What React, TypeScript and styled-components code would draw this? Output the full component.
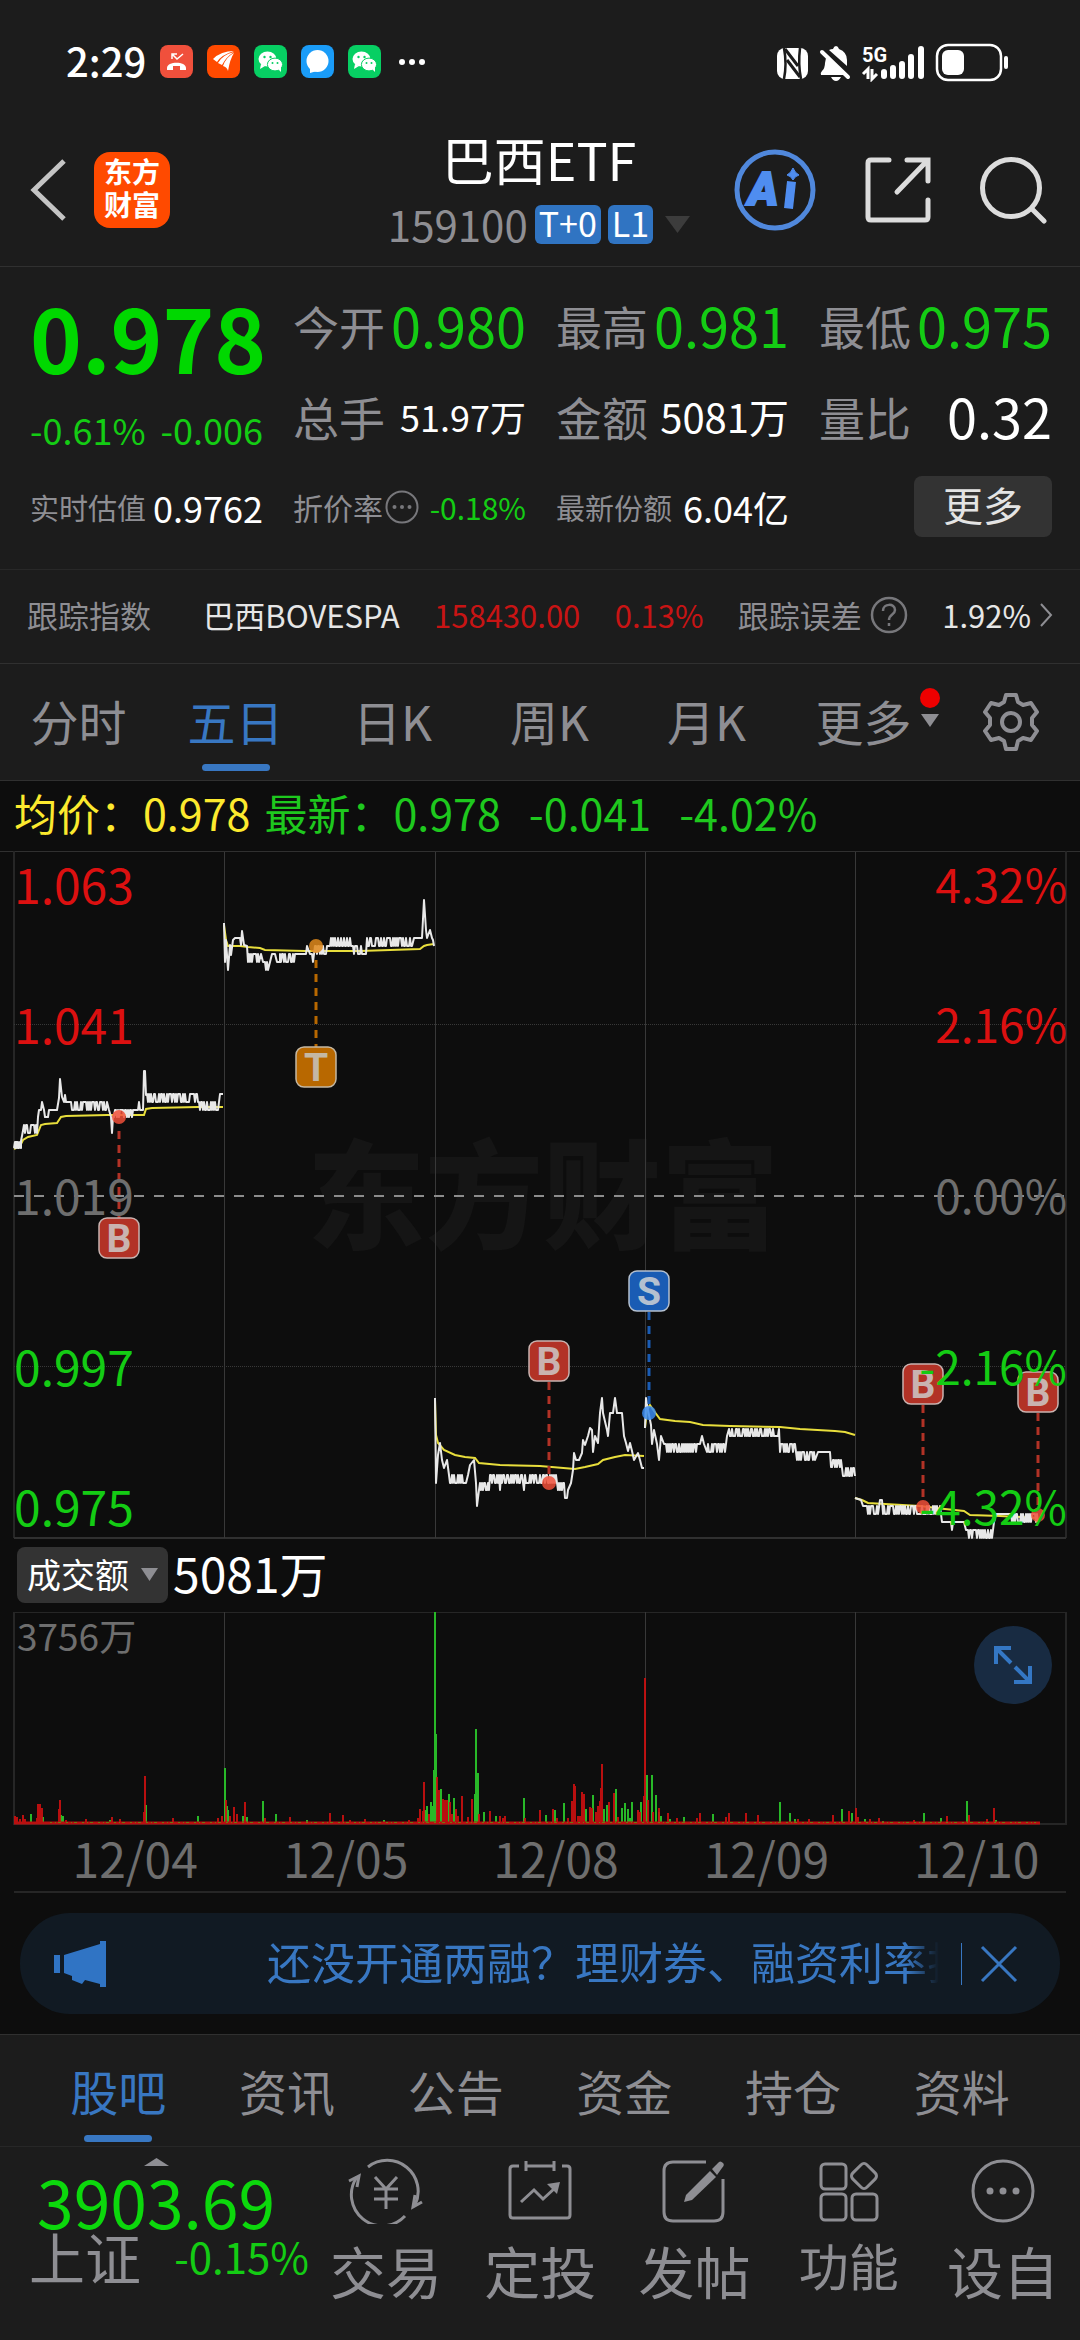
import React from "react";
import styled, { createGlobalStyle } from "styled-components";

const color = {
  panel: "#1c1c1c",
  chart: "#0d0d0d",
  line: "#303030",
  grey: "#8e8e93",
  axis: "#6e6e6e",
  green: "#14cc14",
  red: "#dc1010",
  blue: "#3877c2",
  white: "#ffffff",
  yellow: "#fce92e",
};

const GlobalStyle = createGlobalStyle`
  * { box-sizing: border-box; }
  body {
    margin: 0;
    background: ${color.panel};
    color: ${color.white};
    font-family: "Noto Sans CJK SC", "Noto Sans", sans-serif;
  }
  button, select {
    font: inherit;
    color: inherit;
    background: none;
    border: 0;
    padding: 0;
    margin: 0;
  }
  a { color: inherit; text-decoration: none; }
  svg { display: block; flex-shrink: 0; }
`;

const Page = styled.main`
  display: flex;
  flex-direction: column;
  min-height: 100vh;
  overflow: hidden;
`;

/* ---------- status bar ---------- */

const StatusBar = styled.div`
  display: flex;
  justify-content: space-between;
  align-items: center;
  height: 120px;
  padding: 3px 70px 0 66px;
`;

const StatusGroup = styled.div`
  display: flex;
  align-items: center;
  gap: 14px;
`;

const Clock = styled.span`
  font-size: 40px;
  line-height: 48px;
  font-weight: 500;
  padding-bottom: 4px;
`;

/* ---------- header ---------- */

const Header = styled.header`
  display: grid;
  grid-template-columns: 1fr auto 1fr;
  height: 147px;
  padding: 0 32px 0 30px;
  border-bottom: 1px solid ${color.line};
`;

const HeaderSide = styled.div<{ $end?: boolean }>`
  display: flex;
  align-items: center;
  justify-content: ${(p) => (p.$end ? "flex-end" : "flex-start")};
  gap: ${(p) => (p.$end ? 49 : 28)}px;
  padding-bottom: 6px;
`;

const IconButton = styled.button`
  display: flex;
  align-items: center;
  justify-content: center;
`;

const Logo = styled.a`
  display: flex;
  flex-direction: column;
  align-items: center;
  justify-content: center;
  width: 76px;
  height: 76px;
  padding-bottom: 4px;
  border-radius: 16px;
  background: #ff4a00;
  font-size: 28px;
  line-height: 33px;
  font-weight: 700;
`;

const TitleBlock = styled.div`
  display: flex;
  flex-direction: column;
  align-items: center;
  padding-top: 9px;
`;

const Title = styled.h1`
  margin: 0;
  font-size: 52px;
  line-height: 60px;
  font-weight: 400;
`;

const CodeRow = styled.div`
  display: flex;
  align-items: center;
  gap: 7px;
  color: ${color.grey};
  font-size: 42px;
  line-height: 70px;
`;

const Badge = styled.span`
  height: 39px;
  padding: 0 4px;
  border-radius: 6px;
  background: #3074c2;
  color: ${color.white};
  font-size: 34px;
  line-height: 35px;
`;

const DropButton = styled(IconButton)`
  padding-left: 5px;
`;

/* ---------- quote ---------- */

const Quote = styled.section`
  display: grid;
  grid-template-columns: repeat(4, minmax(0, 1fr));
  grid-auto-rows: 91px;
  column-gap: 30px;
  padding: 12px 28px 17px 30px;
  border-bottom: 1px solid #282828;
`;

const PriceCell = styled.div`
  grid-row: span 2;
  color: ${color.green};
`;

const BigPrice = styled.div`
  font-size: 88px;
  line-height: 114px;
  font-weight: 700;
  color: #00d800;
`;

const Split = styled.div`
  display: flex;
  justify-content: space-between;
  font-size: 36px;
  line-height: 72px;
`;

const Stat = styled.div`
  display: flex;
  align-items: center;
  justify-content: space-between;
  white-space: nowrap;
`;

const Label = styled.span<{ $size: number }>`
  display: flex;
  align-items: center;
  gap: 2px;
  color: ${color.grey};
  font-size: ${(p) => p.$size}px;
`;

const Value = styled.span<{ $size: number; $color?: string }>`
  font-size: ${(p) => p.$size}px;
  color: ${(p) => p.$color ?? color.white};
`;

const MoreButton = styled.button`
  justify-self: end;
  align-self: center;
  width: 138px;
  height: 61px;
  padding-bottom: 4px;
  border-radius: 8px;
  background: #333333;
  color: #e4e4e4;
  font-size: 40px;
  line-height: 57px;
`;

/* ---------- tracked index ---------- */

const IndexRow = styled.section`
  display: flex;
  align-items: center;
  justify-content: space-between;
  height: 94px;
  padding: 0 27px 4px;
  border-bottom: 1px solid ${color.line};
  font-size: 31px;
  white-space: nowrap;
`;

const IndexText = styled.span<{ $color?: string; $lead?: number }>`
  display: flex;
  align-items: center;
  gap: 8px;
  margin-left: ${(p) => p.$lead ?? 0}px;
  color: ${(p) => p.$color ?? "#e6e6e6"};
`;

/* ---------- tabs ---------- */

const ChartTabs = styled.nav`
  display: grid;
  grid-template-columns: repeat(6, 157fr) 138fr;
  height: 117px;
  border-bottom: 1px solid ${color.line};
`;

const Tab = styled.button<{ $active?: boolean }>`
  position: relative;
  display: flex;
  align-items: center;
  justify-content: center;
  gap: 9px;
  font-size: 48px;
  line-height: 64px;
  padding-bottom: 4px;
  white-space: nowrap;
  color: ${(p) => (p.$active ? color.blue : color.grey)};
  &::after {
    content: "";
    display: ${(p) => (p.$active ? "block" : "none")};
    position: absolute;
    left: calc(50% - 34px);
    bottom: 9px;
    width: 68px;
    height: 7px;
    border-radius: 4px;
    background: ${color.blue};
  }
`;

const MoreTab = styled(Tab)`
  padding-left: 27px;
`;

const Dot = styled.i`
  position: absolute;
  right: 2px;
  top: 24px;
  width: 20px;
  height: 20px;
  border-radius: 50%;
  background: #ee0000;
`;

/* ---------- charts ---------- */

const ChartPanel = styled.section`
  background: ${color.chart};
`;

const Legend = styled.div`
  display: flex;
  height: 69px;
  padding-left: 14px;
  font-size: 43px;
  line-height: 62px;
  white-space: pre;
  color: #1ec81e;
`;

const LegendItem = styled.span<{ $color?: string; $gap: number }>`
  color: ${(p) => p.$color ?? "inherit"};
  margin-right: ${(p) => p.$gap}px;
`;

const Stack = styled.div`
  position: relative;
  display: grid;
  & > * { grid-area: 1 / 1; }
`;

const Drawing = styled.svg`
  width: 100%;
  height: auto;
`;

const Axis = styled.div`
  display: grid;
  grid-template-rows: 56fr 224fr 118fr 224fr 56fr;
  padding: 5px 13px 7px 14px;
  font-size: 48px;
  line-height: 56px;
  z-index: 1;
`;

const AxisRow = styled.div<{ $color: string }>`
  display: flex;
  align-items: center;
  justify-content: space-between;
  color: ${(p) => p.$color};
`;

const AxisPercent = styled.span`
  font-size: 46px;
`;

const VolumeHead = styled.div`
  display: flex;
  align-items: center;
  gap: 5px;
  height: 70px;
  padding: 0 0 0 17px;
  font-size: 48px;
`;

const VolumeTotal = styled.span`
  line-height: 60px;
  padding-bottom: 6px;
`;

const Picker = styled.label`
  display: flex;
  align-items: center;
  gap: 12px;
  height: 56px;
  padding: 0 10px 2px;
  border-radius: 8px;
  background: #333333;
`;

const PickerSelect = styled.select`
  appearance: none;
  font-size: 34px;
  line-height: 50px;
  height: 52px;
`;

const VolumeMax = styled.span`
  padding: 0 0 0 17px;
  color: ${color.axis};
  font-size: 37px;
  line-height: 50px;
  z-index: 1;
`;

const ExpandButton = styled.button`
  position: absolute;
  right: 28px;
  top: 16px;
  display: flex;
  align-items: center;
  justify-content: center;
  width: 78px;
  height: 78px;
  border-radius: 50%;
  background: #182b42;
`;

const Dates = styled.div`
  display: grid;
  grid-template-columns: repeat(5, 1fr);
  margin: 0 14px;
  height: 67px;
  border-bottom: 2px solid #262626;
  color: ${color.axis};
  font-size: 48px;
  line-height: 62px;
  text-align: center;
  & > span { padding-left: 32px; }
`;

const Banner = styled.aside`
  display: flex;
  align-items: center;
  height: 101px;
  margin: 20px;
  padding: 0 42px 0 34px;
  border-radius: 50px;
  background: #111a23;
  color: ${color.blue};
`;

const BannerText = styled.a`
  flex: 1;
  min-width: 0;
  overflow: hidden;
  white-space: nowrap;
  margin: 0 22px 0 110px;
  padding: 0 0 5px 51px;
  font-size: 44px;
  line-height: 60px;
  mask-image: linear-gradient(to right, #000 calc(100% - 32px), transparent);
`;

const BannerClose = styled(IconButton)`
  height: 42px;
  padding-left: 18px;
  border-left: 1px solid ${color.blue};
`;

/* ---------- bottom ---------- */

const InfoTabs = styled.nav`
  display: grid;
  grid-template-columns: repeat(6, 1fr);
  height: 113px;
  padding: 0 34px;
  border-top: 1px solid ${color.line};
  border-bottom: 1px solid #272727;
  & > ${Tab} { padding-bottom: 2px; }
  & > ${Tab}::after { bottom: 4px; }
`;

const BottomBar = styled.footer`
  display: grid;
  grid-template-columns: 309fr 771fr;
`;

const Market = styled.button`
  display: flex;
  flex-direction: column;
  align-items: stretch;
  padding: 11px 0 0 29px;
  text-align: left;
  color: ${color.green};
`;

const MarketArrow = styled.span`
  display: flex;
  justify-content: center;
  padding-right: 26px;
`;

const MarketValue = styled.span`
  padding-left: 8px;
  font-size: 66px;
  line-height: 68px;
  color: #0cd80c;
`;

const MarketName = styled.span`
  display: flex;
  align-items: center;
  justify-content: space-between;
  font-size: 42px;
  line-height: 44px;
`;

const Actions = styled.nav`
  display: grid;
  grid-template-columns: repeat(5, 1fr);
`;

const Action = styled.button<{ $large: boolean }>`
  display: flex;
  flex-direction: column;
  align-items: center;
  gap: 10px;
  padding-top: 11px;
  color: ${color.grey};
  font-size: ${(p) => (p.$large ? 56 : 50)}px;
  line-height: ${(p) => (p.$large ? 72 : 60)}px;
  white-space: nowrap;
`;

/* ---------- small icons ---------- */

const Triangle = ({ w, h, fill, up }: { w: number; h: number; fill: string; up?: boolean }) => (
  <svg width={w} height={h} viewBox="0 0 10 10" preserveAspectRatio="none" aria-hidden>
    <path d={up ? "M0 10L5 0L10 10Z" : "M0 0H10L5 10Z"} fill={fill} />
  </svg>
);

const AppTile = ({ fill, children }: { fill: string; children: React.ReactNode }) => (
  <svg width="33" height="33" viewBox="0 0 33 33" aria-hidden>
    <rect width="33" height="33" rx="8" fill={fill} />
    {children}
  </svg>
);

const WeChat = () => (
  <AppTile fill="#07cf63">
    <ellipse cx="13.5" cy="14" rx="9" ry="7.6" fill="#fff" />
    <path d="M7 19l-1 5 5-3z" fill="#fff" />
    <circle cx="10.5" cy="12" r="1.2" fill="#07cf63" />
    <circle cx="16.5" cy="12" r="1.2" fill="#07cf63" />
    <ellipse cx="21" cy="19.5" rx="7.6" ry="6.4" fill="#fff" stroke="#07cf63" strokeWidth="1" />
    <path d="M24 24l3 3v-5z" fill="#fff" />
    <circle cx="18.5" cy="18" r="1" fill="#07cf63" />
    <circle cx="23.5" cy="18" r="1" fill="#07cf63" />
  </AppTile>
);

const StatusIcons = () => (
  <svg width="234" height="40" viewBox="776 40 234 40" fill="none" role="img" aria-label="NFC，静音，5G，电量">
    <rect x="777" y="46" width="31" height="31" rx="8" fill="#fff" />
    <path d="M784 46Q787 62 784 77M800 46Q798 62 801 77" stroke={color.panel} strokeWidth="2.5" />
    <path d="M785 47L798 64M787 58L800 75" stroke={color.panel} strokeWidth="3" />
    <path d="M829 48q2-1 4-1 1-3 3-3t3 3q8 3 8 11v6zM826 56l21 17h-26q-1-2 1-4 3-3 3-8z" fill="#fff" />
    <path d="M822 50L848 75" stroke="#fff" strokeWidth="4" strokeLinecap="round" />
    <path d="M831 75h10q-2 4-5 4t-5-4z" fill="#fff" />
    <text x="862" y="60" fontSize="20" fontWeight="700" fill="#fff" fontFamily="Roboto, sans-serif">5G</text>
    <path d="M868 77V67l-5 5M872 67v10l5-5" stroke="#fff" strokeWidth="3" />
    <g stroke="#fff" strokeWidth="6" strokeLinecap="round">
      <path d="M884 70V74M893 66V74M902 62V74M911 55V74M921 47V74" />
    </g>
    <rect x="937" y="43" width="64" height="35" rx="11" stroke="#fff" strokeWidth="2.500" />
    <rect x="942" y="48" width="22" height="25" rx="6" fill="#fff" />
    <path d="M1006 56V65" stroke="#fff" strokeWidth="4" strokeLinecap="round" />
  </svg>
);

const Gear = () => (
  <svg width="58" height="60" viewBox="0 0 58 60" fill="none" stroke={color.grey} strokeWidth="4" aria-hidden>
    <path d="M24 3h10l2 7 5 3 8-2 6 9-5 6v7l5 6-6 9-8-2-5 3-2 8H24l-2-8-5-3-8 2-6-9 5-6v-7l-5-6 6-9 8 2 5-3z" strokeLinejoin="round" />
    <circle cx="29" cy="30" r="9" />
  </svg>
);

/* ---------- chart data ---------- */

type Point = [number, number];

// A stretch of minute ticks that flips between two neighbouring price levels.
const ticks = (from: number, to: number, high: number, low: number, seed = 1): Point[] => {
  const out: Point[] = [];
  let s = seed * 7919 + 13;
  let top = false;
  for (let x = from; x <= to; x += 1) {
    s = (s * 1103515245 + 12345) % 2147483648;
    if (s / 2147483648 < 0.62) top = !top;
    out.push([x, top ? high : low]);
  }
  return out;
};

const priceDays: Point[][] = [
  [
    [14, 1148], [15, 1142], [15, 1148], [16, 1142], [16, 1148], [17, 1142], [18, 1148], [18, 1142], [19, 1148], [20, 1142], [21, 1148], [21, 1141], [22, 1136],
    ...ticks(24, 37, 1125, 1133, 2),
    [38, 1117], [39, 1110], [41, 1110], [42, 1102], [44, 1110], [45, 1117], [48, 1117], [49, 1110], [57, 1110], [59, 1098], [60, 1079], [62, 1097], [64, 1102], [65, 1095], [66, 1102], [70, 1102],
    ...ticks(71, 107, 1102, 1110, 3),
    [109, 1110], [111, 1117], [112, 1133], [113, 1117],
    ...ticks(114, 134, 1110, 1117, 4),
    [134, 1110], [138, 1110], [139, 1102], [140, 1110], [143, 1110], [144, 1071], [145, 1071], [146, 1095],
    ...ticks(147, 198, 1094, 1102, 5),
    ...ticks(199, 218, 1102, 1110, 6),
    [220, 1094], [223, 1094],
  ],
  [
    [224, 923], [225, 962], [226, 940], [228, 970], [230, 945], [231, 955], [233, 940], [235, 938], [240, 938], [241, 945], [242, 931], [244, 945], [247, 946],
    ...ticks(248, 259, 954, 962, 7), [261, 954],
    ...ticks(263, 268, 962, 970, 8), [270, 962], [272, 954], [275, 954], [277, 962], [280, 962],
    ...ticks(280, 294, 954, 962, 9), [295, 954], [306, 954], [307, 946], [310, 954], [312, 954], [313, 962],
    ...ticks(315, 329, 946, 954, 10),
    ...ticks(330, 350, 938, 946, 11),
    ...ticks(351, 366, 946, 954, 12),
    ...ticks(367, 412, 938, 946, 13),
    [414, 938], [422, 938], [424, 900], [426, 930], [427, 938], [430, 930], [432, 938], [433, 940], [434, 946],
  ],
  [
    [435, 1398], [436, 1483], [438, 1455], [440, 1443], [442, 1460], [444, 1468], [447, 1460], [449, 1475],
    ...ticks(450, 466, 1475, 1483, 14),
    [468, 1475], [470, 1465], [474, 1460], [476, 1483], [477, 1506], [479, 1490],
    ...ticks(480, 489, 1483, 1490, 15),
    ...ticks(490, 498, 1475, 1483, 16), [499, 1475], [500, 1490], [501, 1475],
    ...ticks(502, 522, 1475, 1483, 17), [524, 1490], [525, 1475],
    ...ticks(526, 556, 1475, 1483, 18),
    ...ticks(557, 564, 1483, 1490, 19),
    [565, 1498], [567, 1498], [568, 1490], [571, 1483], [573, 1470], [574, 1453], [576, 1460], [579, 1460], [582, 1453], [583, 1440], [585, 1445], [588, 1436], [590, 1428], [592, 1430], [593, 1452], [595, 1436], [598, 1443], [600, 1413], [602, 1398], [603, 1413], [607, 1430], [608, 1436], [610, 1413], [613, 1413], [615, 1398], [617, 1413], [622, 1413], [624, 1436], [626, 1443], [628, 1451], [630, 1443], [632, 1451], [634, 1460], [638, 1453], [640, 1460], [642, 1468], [644, 1468],
  ],
  [
    [645, 1428], [646, 1398], [648, 1410], [651, 1425], [652, 1444], [654, 1430], [657, 1444], [659, 1460], [661, 1436], [664, 1444],
    ...ticks(666, 698, 1444, 1452, 20), [700, 1444], [702, 1436], [704, 1444],
    ...ticks(707, 726, 1444, 1452, 21), [727, 1436],
    ...ticks(729, 779, 1429, 1436, 22), [780, 1452],
    ...ticks(781, 796, 1444, 1452, 23),
    ...ticks(797, 815, 1452, 1460, 24), [818, 1452], [830, 1452],
    ...ticks(831, 841, 1460, 1467, 25),
    ...ticks(842, 855, 1468, 1476, 26),
  ],
  [
    [855, 1498], [861, 1500], [863, 1506],
    ...ticks(865, 878, 1506, 1514, 27), [880, 1500], [882, 1500],
    ...ticks(883, 940, 1506, 1514, 28), [942, 1522], [951, 1522], [952, 1530], [953, 1522], [964, 1522], [966, 1530],
    ...ticks(967, 993, 1530, 1538, 29), [994, 1522], [996, 1514], [1010, 1514],
    ...ticks(1011, 1038, 1514, 1522, 30),
  ],
];

const averageDays: Point[][] = [
  [[14, 1149], [20, 1146], [23, 1140], [28, 1137], [37, 1135], [41, 1125], [45, 1124], [57, 1123], [61, 1117], [66, 1116], [107, 1115], [144, 1115], [146, 1109], [152, 1108], [198, 1107], [223, 1107]],
  [[224, 925], [226, 940], [228, 946], [240, 946], [248, 947], [260, 948], [265, 950], [305, 951], [360, 951], [420, 949], [424, 946], [427, 945], [434, 944]],
  [[435, 1400], [436, 1435], [438, 1443], [444, 1450], [455, 1455], [465, 1457], [475, 1458], [479, 1463], [500, 1465], [540, 1466], [575, 1469], [585, 1467], [598, 1464], [603, 1460], [615, 1457], [625, 1455], [644, 1456]],
  [[645, 1428], [647, 1410], [650, 1405], [654, 1411], [660, 1419], [675, 1421], [690, 1422], [703, 1425], [730, 1426], [780, 1427], [800, 1429], [835, 1431], [845, 1432], [855, 1435]],
  [[855, 1498], [862, 1500], [868, 1503], [885, 1504], [920, 1506], [945, 1509], [964, 1511], [970, 1515], [1000, 1516], [1038, 1518]],
];

const toPath = (points: Point[]) => "M" + points.map(([x, y]) => `${x} ${y}`).join("L");

const trades = [
  { kind: "B", x: 119, badge: 1238, dot: 1117, fill: "#b23226", point: "#f0503a", ink: "#c9b3b0" },
  { kind: "T", x: 316, badge: 1067, dot: 946, fill: "#b86800", point: "#e08a1c", ink: "#c4b8a4" },
  { kind: "B", x: 549, badge: 1361, dot: 1483, fill: "#b23226", point: "#f0503a", ink: "#c9b3b0" },
  { kind: "S", x: 649, badge: 1291, dot: 1413, fill: "#1a5cb4", point: "#3b8cf0", ink: "#b4c0d0" },
  { kind: "B", x: 923, badge: 1384, dot: 1507, fill: "#b23226", point: "#f0503a", ink: "#c9b3b0" },
  { kind: "B", x: 1038, badge: 1392, dot: 1515, fill: "#b23226", point: "#f0503a", ink: "#c9b3b0" },
];

const dayLines = [224, 435, 645, 855];

const PriceChart = () => (
  <Drawing viewBox="0 850 1080 690" fill="none" role="img" aria-label="五日走势">
    <text x="543" y="1240" textAnchor="middle" fontSize="118" fontWeight="900" fill="#151515">东方财富</text>
    <path d="M0 851.5H1080" stroke={color.line} />
    <path d="M14 851V1538M1066 851V1538" stroke="#262626" strokeWidth="2" />
    <path d="M14 1538H1066" stroke={color.line} strokeWidth="2" />
    {dayLines.map((x) => (
      <path key={x} d={`M${x + 0.5} 852V1538`} stroke="#383838" />
    ))}
    <path d="M14 1024.5H1066M14 1366.5H1066" stroke="#383838" strokeDasharray="1 1" />
    {averageDays.map((day, i) => (
      <path key={i} d={toPath(day)} stroke="#e8de3c" strokeWidth="2" />
    ))}
    {priceDays.map((day, i) => (
      <path key={i} d={toPath(day)} stroke="#e8e8e8" strokeWidth="2" strokeLinejoin="round" />
    ))}
    <path d="M14 1196H1066" stroke="#8c8c8c" strokeWidth="2" strokeDasharray="10 10" />
    {trades.map((t) => {
      const below = t.badge > t.dot;
      return (
        <g key={t.x}>
          <path
            d={below ? `M${t.x} ${t.dot + 14}V${t.badge - 20}` : `M${t.x} ${t.badge + 21}V${t.dot - 6}`}
            stroke={t.fill}
            strokeWidth="3"
            strokeDasharray="8 6"
          />
          <circle cx={t.x} cy={t.dot} r="7" fill={t.point} fillOpacity="0.85" />
          <rect x={t.x - 20} y={t.badge - 20} width="40" height="40" rx="8" fill={t.fill} stroke={t.ink} strokeWidth="1.5" />
          <text x={t.x} y={t.badge + 14} textAnchor="middle" fontSize="39" fontWeight="700" fill={t.ink} fontFamily="Roboto, sans-serif">
            {t.kind}
          </text>
        </g>
      );
    })}
  </Drawing>
);

const redBars: Point[] = [
  [15, 8], [17, 7], [20, 5], [23, 9], [25, 5], [37, 6], [38, 20], [40, 20], [42, 16], [59, 15], [60, 24], [66, 4], [86, 5], [112, 7], [120, 5], [144, 12], [145, 48], [173, 6], [218, 6], [222, 8], [226, 24], [230, 8], [234, 17], [237, 10], [245, 22], [265, 6], [290, 7], [330, 11], [343, 9], [350, 4], [365, 5], [409, 4], [418, 6], [420, 15], [423, 13], [424, 42], [429, 10], [437, 47], [439, 34], [443, 25], [445, 24], [447, 24], [450, 22], [452, 10], [456, 15], [458, 8], [462, 28], [468, 7], [472, 25], [479, 10], [490, 13], [500, 8], [503, 6], [505, 8], [525, 6], [540, 14], [553, 15], [557, 6], [568, 6], [572, 23], [574, 40], [575, 38], [578, 8], [580, 8], [582, 32], [584, 30], [590, 17], [592, 16], [596, 12], [598, 18], [600, 23], [601, 36], [602, 60], [609, 22], [614, 31], [618, 7], [638, 14], [640, 12], [644, 28], [645, 146], [648, 24], [653, 12], [659, 16], [668, 11], [677, 6], [697, 6], [700, 11], [726, 7], [729, 11], [746, 11], [758, 9], [798, 5], [809, 5], [833, 9], [849, 13], [856, 16], [858, 7], [870, 5], [879, 6], [914, 4], [947, 8], [969, 9], [987, 5], [994, 16],
];

const greenBars: Point[] = [
  [31, 10], [43, 7], [61, 9], [63, 8], [110, 4], [146, 19], [198, 8], [225, 56], [227, 18], [228, 14], [243, 8], [247, 7], [263, 23], [276, 10], [307, 4], [384, 4], [425, 14], [427, 18], [431, 22], [433, 18], [434, 54], [435, 212], [436, 90], [441, 35], [449, 30], [454, 26], [475, 30], [476, 95], [478, 51], [484, 12], [496, 8], [524, 26], [546, 9], [555, 14], [564, 21], [586, 15], [593, 29], [604, 15], [607, 19], [616, 35], [622, 16], [625, 21], [628, 15], [630, 6], [632, 22], [641, 22], [647, 49], [652, 49], [656, 29], [659, 12], [661, 8], [670, 5], [684, 7], [713, 10], [780, 22], [790, 11], [795, 5], [842, 15], [852, 11], [865, 5], [883, 3], [924, 11], [941, 6], [967, 23], [996, 4],
];

const barsPath = (bars: Point[]) => bars.map(([x, h]) => `M${x} 1824v${-h}`).join("");

const VolumeChart = () => (
  <Drawing viewBox="0 1610 1080 216" fill="none" role="img" aria-label="成交额">
    <path d="M14 1612.5H1066" stroke="#262626" />
    <path d="M14 1612V1824H1066V1612" stroke="#262626" strokeWidth="2" />
    {dayLines.map((x) => (
      <path key={x} d={`M${x + 0.5} 1612V1824`} stroke="#383838" />
    ))}
    <path d={barsPath(greenBars)} stroke="#28b828" strokeWidth="2" />
    <path d={barsPath(redBars)} stroke="#cc1010" strokeOpacity="0.9" strokeWidth="2" />
    <path d="M14 1823H1040" stroke="#b81010" strokeWidth="3" />
    <path d="M50 1822.5H1036" stroke="#6f7a10" strokeDasharray="2 3 1 2 3 5" />
  </Drawing>
);

/* ---------- bottom action icons ---------- */

const ActionIcon = ({ children }: { children: React.ReactNode }) => (
  <svg width="76" height="66" viewBox="0 0 76 66" fill="none" stroke={color.grey} strokeWidth="3" aria-hidden>
    {children}
  </svg>
);

const actions = [
  {
    name: "交易",
    large: true,
    icon: (
      <ActionIcon>
        <path d="M20 9A31 31 0 0 1 67 47M57 58A31 31 0 0 1 9 19" />
        <path d="M1 23L11 18L9 29M74 44L65 49L67 37" />
        <path d="M27 19L38 31L49 19M26 31H50M26 41H50M38 31V51" />
      </ActionIcon>
    ),
  },
  {
    name: "定投",
    large: true,
    icon: (
      <ActionIcon>
        <path d="M17 8H11Q8 8 8 11V57Q8 60 11 60H65Q68 60 68 57V11Q68 8 65 8H60M24 8H52M24 3V13M52 3V13" />
        <path d="M19 44L32 32L41 41L53 30" />
        <path d="M45 26L58 24L55 36Z" fill={color.grey} stroke="none" />
      </ActionIcon>
    ),
  },
  {
    name: "发帖",
    large: true,
    icon: (
      <ActionIcon>
        <path d="M50 4H17Q8 4 8 13V54Q8 63 17 63H58Q67 63 67 54V21" />
        <path d="M54 13L60 19L36 42L28 44L30 37Z" fill={color.grey} stroke="none" />
        <path d="M56 11L62 5Q64 2 67 5Q69 7 66 10L61 17Z" fill={color.grey} stroke="none" />
      </ActionIcon>
    ),
  },
  {
    name: "功能",
    large: false,
    icon: (
      <ActionIcon>
        <rect x="10" y="6" width="25" height="25" rx="4" />
        <rect x="10" y="36" width="25" height="26" rx="4" />
        <rect x="41" y="36" width="25" height="26" rx="4" />
        <rect x="43" y="8" width="20" height="20" rx="4" transform="rotate(45 53 18)" />
      </ActionIcon>
    ),
  },
  {
    name: "设自",
    large: true,
    icon: (
      <ActionIcon>
        <circle cx="38" cy="33" r="30" />
        <g fill={color.grey} stroke="none">
          <circle cx="25" cy="33" r="3.5" />
          <circle cx="38" cy="33" r="3.5" />
          <circle cx="51" cy="33" r="3.5" />
        </g>
      </ActionIcon>
    ),
  },
];

const axisRows = [
  { price: "1.063", percent: "4.32%", color: color.red },
  { price: "1.041", percent: "2.16%", color: color.red },
  { price: "1.019", percent: "0.00%", color: color.axis },
  { price: "0.997", percent: "-2.16%", color: color.green },
  { price: "0.975", percent: "-4.32%", color: color.green },
];

export default function App() {
  return (
    <Page lang="zh-CN">
      <GlobalStyle />
      <StatusBar>
        <StatusGroup>
          <Clock>2:29</Clock>
          <AppTile fill="#f0503c">
            <path d="M7 23c0-7 19-7 19 0v2h-6v-4h-7v4H7z" fill="#fff" />
            <path d="M12 9l5 5 6-5M12 14V9h5" stroke="#fff" strokeWidth="1.5" fill="none" />
          </AppTile>
          <AppTile fill="#ff4a00">
            <path d="M6 14Q14 6 27 6Q14 10 10 17ZM11 18Q15 10 27 7Q19 12 15 20ZM16 21Q19 12 27 8Q23 14 21 26Q20 22 16 21Z" fill="#fff" />
          </AppTile>
          <WeChat />
          <AppTile fill="#1a9cf8">
            <circle cx="16.5" cy="16" r="11" fill="#fff" />
            <path d="M9 22v6l7-2z" fill="#fff" />
          </AppTile>
          <WeChat />
          <svg width="34" height="8" viewBox="0 0 34 8" fill="#fff" aria-hidden>
            <circle cx="7" cy="4" r="3" />
            <circle cx="17" cy="4" r="3" />
            <circle cx="27" cy="4" r="3" />
          </svg>
        </StatusGroup>
        <StatusIcons />
      </StatusBar>

      <Header>
        <HeaderSide>
          <IconButton aria-label="返回">
            <svg width="36" height="62" viewBox="0 0 36 62" fill="none" stroke="#c4c4c4" strokeWidth="5">
              <path d="M34 2L4 31L34 60" />
            </svg>
          </IconButton>
          <Logo href="#home">
            <span>东方</span>
            <span>财富</span>
          </Logo>
        </HeaderSide>
        <TitleBlock>
          <Title>巴西ETF</Title>
          <CodeRow>
            159100
            <Badge>T+0</Badge>
            <Badge>L1</Badge>
            <DropButton aria-label="展开">
              <Triangle w={25} h={17} fill="#3c3c3c" />
            </DropButton>
          </CodeRow>
        </TitleBlock>
        <HeaderSide $end>
          <IconButton aria-label="AI">
            <svg width="82" height="82" viewBox="0 0 82 82" fill="none">
              <circle cx="41" cy="41" r="38" stroke="#5088dc" strokeWidth="5" />
              <text x="14" y="56" fontSize="46" fontWeight="900" fontStyle="italic" fill="#4f8df0" stroke="#4f8df0" strokeWidth="2" fontFamily="Roboto, sans-serif">A</text>
              <path d="M54 37L52 55" stroke="#4f8df0" strokeWidth="9" strokeLinecap="square" transform="translate(3 0)" />
              <path d="M59 19Q61 24 65 26Q61 27 59 31Q57 27 53 26Q57 24 59 19Z" fill="#4f8df0" stroke="#4f8df0" />
            </svg>
          </IconButton>
          <IconButton aria-label="分享">
            <svg width="66" height="66" viewBox="0 0 66 66" fill="none" stroke="#dcdcdc" strokeWidth="5" strokeLinecap="round">
              <path d="M24 3H6Q3 3 3 6V60Q3 63 6 63H60Q63 63 63 60V43M42 3H63V24M60 6L32 35" />
            </svg>
          </IconButton>
          <IconButton aria-label="搜索">
            <svg width="68" height="68" viewBox="0 0 68 68" fill="none" stroke="#dcdcdc" strokeWidth="5" strokeLinecap="round">
              <circle cx="31" cy="32" r="28.500" />
              <path d="M52 53L64 65" />
            </svg>
          </IconButton>
        </HeaderSide>
      </Header>

      <Quote>
        <PriceCell>
          <BigPrice>0.978</BigPrice>
          <Split>
            <span>-0.61%</span>
            <span>-0.006</span>
          </Split>
        </PriceCell>
        <Stat><Label $size={46}>今开</Label><Value $size={54} $color={color.green}>0.980</Value></Stat>
        <Stat><Label $size={46}>最高</Label><Value $size={54} $color={color.green}>0.981</Value></Stat>
        <Stat><Label $size={46}>最低</Label><Value $size={54} $color={color.green}>0.975</Value></Stat>
        <Stat><Label $size={46}>总手</Label><Value $size={36}>51.97万</Value></Stat>
        <Stat><Label $size={46}>金额</Label><Value $size={40}>5081万</Value></Stat>
        <Stat><Label $size={46}>量比</Label><Value $size={54}>0.32</Value></Stat>
        <Stat><Label $size={29}>实时估值</Label><Value $size={36}>0.9762</Value></Stat>
        <Stat>
          <Label $size={30}>
            折价率
            <svg width="34" height="34" viewBox="0 0 34 34" fill="none" aria-hidden>
              <circle cx="17" cy="17" r="15.5" stroke="#77777b" strokeWidth="2" />
              <g fill="#77777b">
                <circle cx="9.500" cy="17" r="2" />
                <circle cx="17" cy="17" r="2" />
                <circle cx="24.500" cy="17" r="2" />
              </g>
            </svg>
          </Label>
          <Value $size={30} $color={color.green}>-0.18%</Value>
        </Stat>
        <Stat><Label $size={29}>最新份额</Label><Value $size={36}>6.04亿</Value></Stat>
        <MoreButton>更多</MoreButton>
      </Quote>

      <IndexRow>
        <IndexText $color={color.grey}>跟踪指数</IndexText>
        <IndexText $lead={18}>巴西BOVESPA</IndexText>
        <IndexText $color="#c81414">158430.00</IndexText>
        <IndexText $color="#c81414">0.13%</IndexText>
        <IndexText $color={color.grey}>
          跟踪误差
          <svg width="38" height="38" viewBox="0 0 38 38" fill="none" stroke="#77777b" strokeWidth="2.500" aria-hidden>
            <circle cx="19" cy="19" r="17" />
            <path d="M13 15C13 7 25 7 25 14C25 19 19 18 19 24M19 27V30" />
          </svg>
        </IndexText>
        <IndexText>
          1.92%
          <svg width="14" height="24" viewBox="0 0 14 24" fill="none" stroke={color.grey} strokeWidth="2" aria-hidden>
            <path d="M2 1L12 12L2 23" />
          </svg>
        </IndexText>
      </IndexRow>

      <ChartTabs>
        <Tab>分时</Tab>
        <Tab $active>五日</Tab>
        <Tab>日K</Tab>
        <Tab>周K</Tab>
        <Tab>月K</Tab>
        <MoreTab>
          更多
          <Triangle w={18} h={13} fill={color.grey} />
          <Dot />
        </MoreTab>
        <IconButton aria-label="设置">
          <Gear />
        </IconButton>
      </ChartTabs>

      <ChartPanel>
        <Legend>
          <LegendItem $gap={14} $color={color.yellow}>均价：0.978</LegendItem>
          <LegendItem $gap={28}>最新：0.978</LegendItem>
          <LegendItem $gap={28}>-0.041</LegendItem>
          <LegendItem $gap={0}>-4.02%</LegendItem>
        </Legend>
        <Stack>
          <PriceChart />
          <Axis>
            {axisRows.map((row) => (
              <AxisRow key={row.price} $color={row.color}>
                <span>{row.price}</span>
                <AxisPercent>{row.percent}</AxisPercent>
              </AxisRow>
            ))}
          </Axis>
        </Stack>
        <VolumeHead>
          <Picker>
            <PickerSelect aria-label="指标" defaultValue="成交额">
              <option>成交额</option>
              <option>成交量</option>
            </PickerSelect>
            <Triangle w={17} h={13} fill={color.grey} />
          </Picker>
          <VolumeTotal>5081万</VolumeTotal>
        </VolumeHead>
        <Stack>
          <VolumeChart />
          <VolumeMax>3756万</VolumeMax>
          <ExpandButton aria-label="全屏">
            <svg width="42" height="42" viewBox="0 0 42 42" fill="none" stroke="#3477c4" strokeWidth="4" aria-hidden>
              <path d="M19 4H4V20M4 4L19 19M38 22V38H22M38 38L23 23" />
            </svg>
          </ExpandButton>
        </Stack>
        <Dates>
          {["12/04", "12/05", "12/08", "12/09", "12/10"].map((d) => (
            <span key={d}>{d}</span>
          ))}
        </Dates>
        <Banner>
          <svg width="52" height="46" viewBox="0 0 52 46" fill="#3074c4" aria-hidden>
            <path d="M0 14H6V32H0ZM10 14L46 3V0H52V46H46V43L31 39L28 43L18 39V35L10 32Z" />
          </svg>
          <BannerText href="#margin">还没开通两融？理财券、融资利率折</BannerText>
          <BannerClose aria-label="关闭">
            <svg width="38" height="38" viewBox="0 0 38 38" fill="none" stroke={color.blue} strokeWidth="3">
              <path d="M2 2L36 36M36 2L2 36" />
            </svg>
          </BannerClose>
        </Banner>
      </ChartPanel>

      <InfoTabs>
        <Tab $active>股吧</Tab>
        <Tab>资讯</Tab>
        <Tab>公告</Tab>
        <Tab>资金</Tab>
        <Tab>持仓</Tab>
        <Tab>资料</Tab>
      </InfoTabs>

      <BottomBar>
        <Market>
          <MarketArrow>
            <Triangle w={25} h={8} fill={color.grey} up />
          </MarketArrow>
          <MarketValue>3903.69</MarketValue>
          <MarketName>
            <Label $size={56}>上证</Label>
            <span>-0.15%</span>
          </MarketName>
        </Market>
        <Actions>
          {actions.map((a) => (
            <Action key={a.name} $large={a.large}>
              {a.icon}
              {a.name}
            </Action>
          ))}
        </Actions>
      </BottomBar>
    </Page>
  );
}
